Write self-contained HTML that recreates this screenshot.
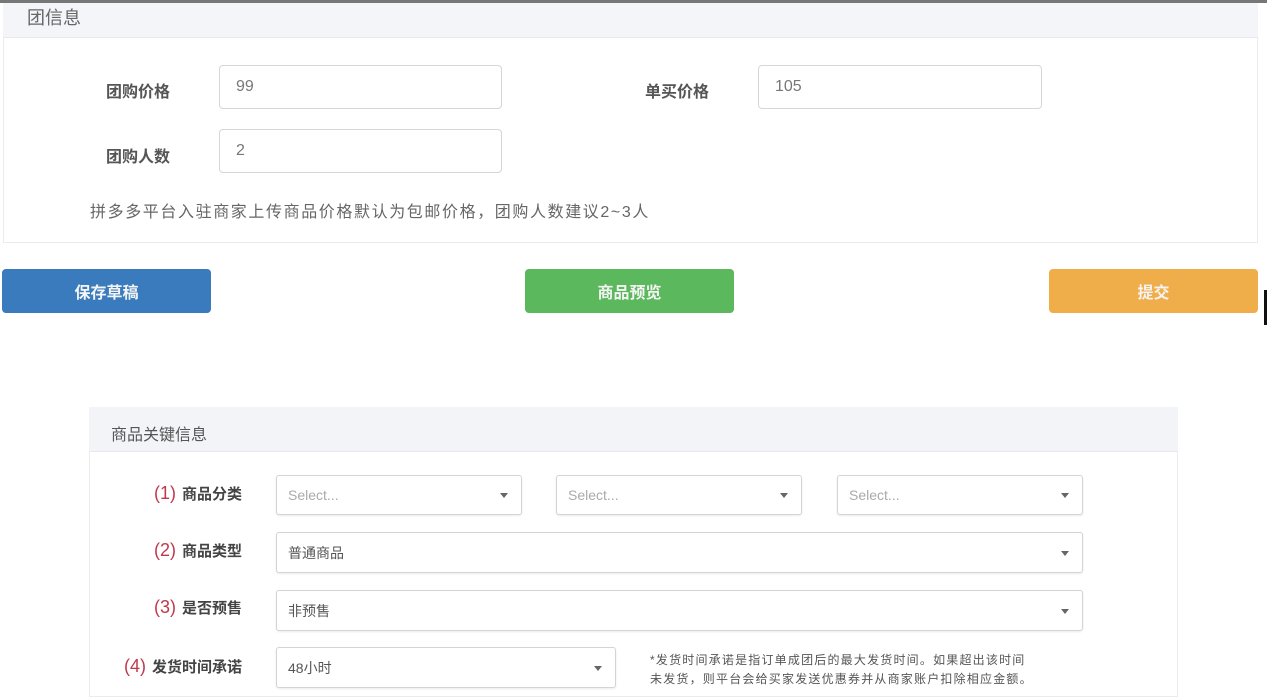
<!DOCTYPE html>
<html><head><meta charset="utf-8"><style>
*{box-sizing:border-box;margin:0;padding:0}
body{width:1267px;height:693px;background:#fff;position:relative;overflow:hidden;font-family:"Liberation Sans","Noto Sans CJK SC",sans-serif;color:#333}
.a{position:absolute}
.inp{position:absolute;border:1px solid #d6d6d6;border-radius:4px;background:#fff;font-size:16px;color:#777;padding-left:16px;display:flex;align-items:center}
.lbl{position:absolute;font-size:16px;font-weight:bold;color:#555}
.btn{position:absolute;height:44px;width:209px;border-radius:4px;color:#f4f4f4;font-size:16px;font-weight:bold;display:flex;align-items:center;justify-content:center}
.sel{position:absolute;border:1px solid #d4d4d4;border-radius:3px;background:#fff;font-size:14px;color:#555;padding-left:11px;display:flex;align-items:center;box-shadow:0 1px 2px rgba(0,0,0,.08)}
.sel::after{content:"";position:absolute;right:13px;top:50%;margin-top:-2px;border-left:4px solid transparent;border-right:4px solid transparent;border-top:5px solid #666}
.ph{color:#aaa}
.l2{position:absolute;font-size:15px;font-weight:bold;color:#444;text-align:right}
.l2 b{color:#c0394b;font-weight:normal;font-size:18px;margin-right:6px}
</style></head><body>
<div class="a" style="left:0;top:0;width:1267px;height:3px;background:#777"></div>
<div class="a" style="left:3px;top:3px;width:1255px;height:240px;border:1px solid #ececec;border-top:none"></div>
<div class="a" style="left:3px;top:3px;width:1255px;height:35px;background:#f4f5f9;border-bottom:1px solid #e8e8ee"></div>
<div class="a" style="left:27px;top:4px;font-size:18px;color:#666">团信息</div>
<div class="lbl" style="left:106px;top:78px">团购价格</div>
<div class="inp" style="left:219px;top:65px;width:283px;height:44px">99</div>
<div class="lbl" style="left:645px;top:78px">单买价格</div>
<div class="inp" style="left:758px;top:65px;width:284px;height:44px">105</div>
<div class="lbl" style="left:106px;top:143px">团购人数</div>
<div class="inp" style="left:219px;top:129px;width:283px;height:44px">2</div>
<div class="a" style="left:90px;top:198px;font-size:16px;letter-spacing:1.6px;color:#666;white-space:nowrap">拼多多平台入驻商家上传商品价格默认为包邮价格，团购人数建议2~3人</div>
<div class="btn" style="left:2px;top:269px;background:#3a7bbd">保存草稿</div>
<div class="btn" style="left:525px;top:269px;background:#5cb85c">商品预览</div>
<div class="btn" style="left:1049px;top:269px;background:#f0ae4a">提交</div>
<div class="a" style="left:1264px;top:290px;width:3px;height:35px;background:#111"></div>

<div class="a" style="left:89px;top:407px;width:1089px;height:290px;border:1px solid #ececec"></div>
<div class="a" style="left:89px;top:407px;width:1089px;height:45px;background:#f3f4f8;border-bottom:1px solid #e8e8ee"></div>
<div class="a" style="left:111px;top:421px;font-size:16px;color:#555">商品关键信息</div>

<div class="l2" style="left:100px;top:483px;width:142px"><b>(1)</b>商品分类</div>
<div class="sel ph" style="left:276px;top:475px;width:246px;height:40px">Select...</div>
<div class="sel ph" style="left:556px;top:475px;width:246px;height:40px">Select...</div>
<div class="sel ph" style="left:837px;top:475px;width:246px;height:40px">Select...</div>
<div class="l2" style="left:100px;top:540px;width:142px"><b>(2)</b>商品类型</div>
<div class="sel" style="left:276px;top:532px;width:807px;height:41px">普通商品</div>
<div class="l2" style="left:100px;top:597px;width:142px"><b>(3)</b>是否预售</div>
<div class="sel" style="left:276px;top:590px;width:807px;height:41px">非预售</div>
<div class="l2" style="left:90px;top:656px;width:152px"><b>(4)</b>发货时间承诺</div>
<div class="sel" style="left:276px;top:647px;width:340px;height:41px">48小时</div>
<div class="a" style="left:650px;top:651px;font-size:12px;letter-spacing:1.2px;color:#555;line-height:19px;white-space:nowrap">*发货时间承诺是指订单成团后的最大发货时间。如果超出该时间<br>未发货，则平台会给买家发送优惠券并从商家账户扣除相应金额。</div>
</body></html>
